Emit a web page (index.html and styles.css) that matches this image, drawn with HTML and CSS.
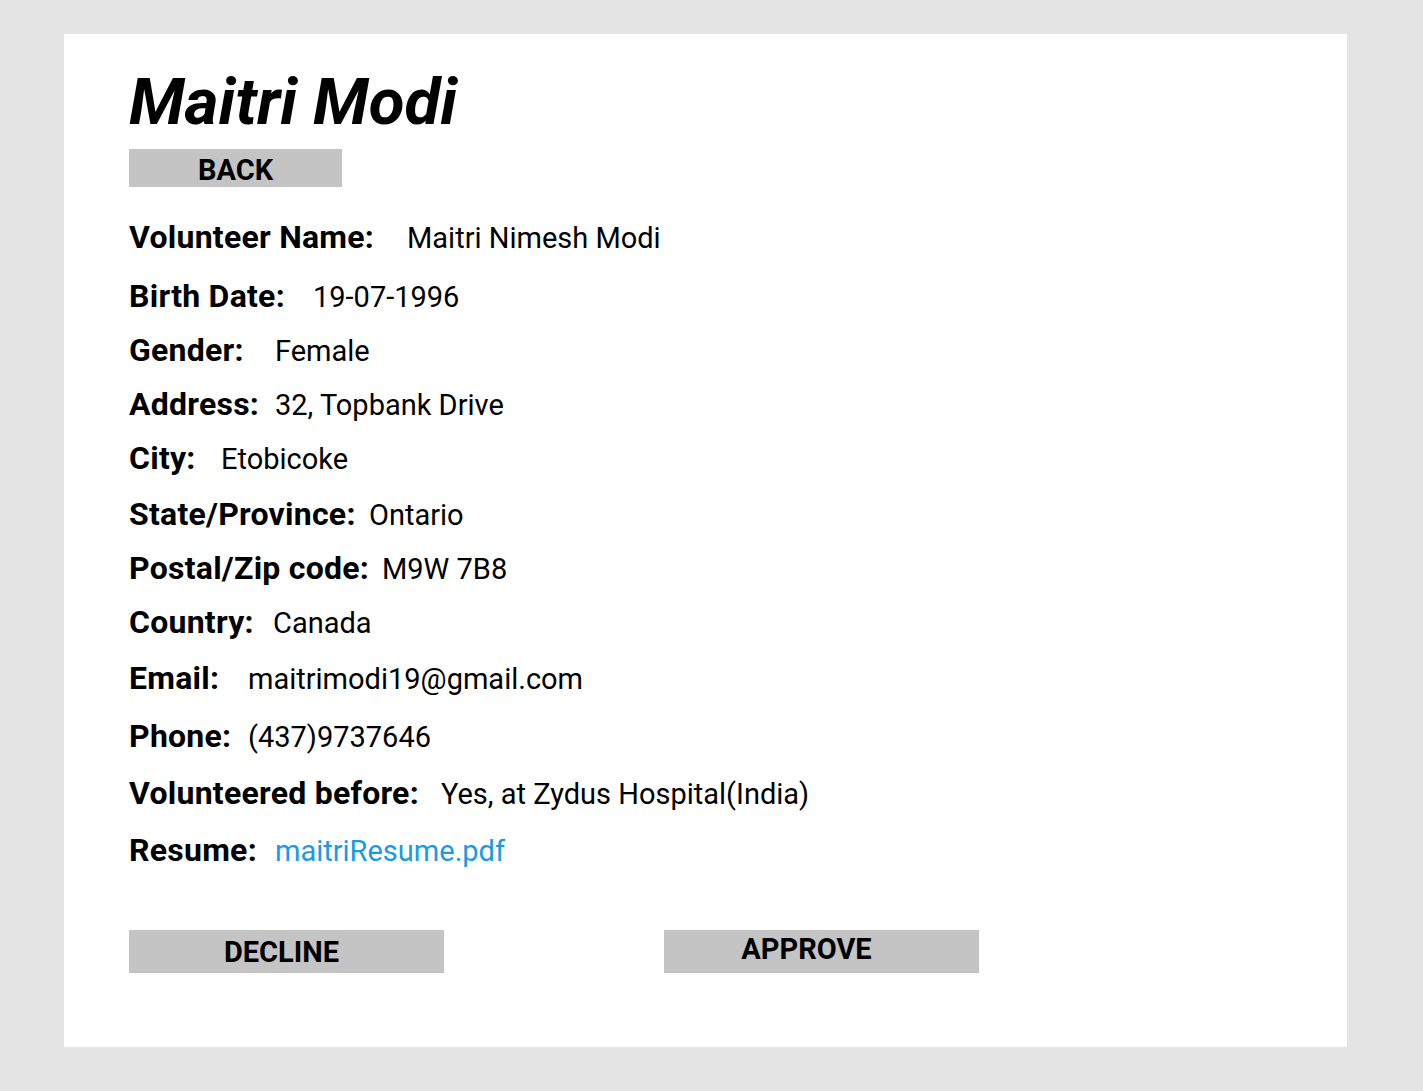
FILE: index.html
```html
<!DOCTYPE html>
<html lang="en">
<head>
<meta charset="utf-8">
<title>Maitri Modi</title>
<link rel="stylesheet" href="styles.css">
</head>
<body>
<main class="card">
  <h1 class="title">Maitri Modi</h1>
  <button class="btn btn-back">BACK</button>
  <section class="details">
    <div class="row"><span class="label">Volunteer Name:</span><span class="value">Maitri Nimesh Modi</span></div>
    <div class="row"><span class="label">Birth Date:</span><span class="value">19-07-1996</span></div>
    <div class="row"><span class="label">Gender:</span><span class="value">Female</span></div>
    <div class="row"><span class="label">Address:</span><span class="value">32, Topbank Drive</span></div>
    <div class="row"><span class="label">City:</span><span class="value">Etobicoke</span></div>
    <div class="row"><span class="label">State/Province:</span><span class="value">Ontario</span></div>
    <div class="row"><span class="label">Postal/Zip code:</span><span class="value">M9W 7B8</span></div>
    <div class="row"><span class="label">Country:</span><span class="value">Canada</span></div>
    <div class="row"><span class="label">Email:</span><span class="value">maitrimodi19@gmail.com</span></div>
    <div class="row"><span class="label">Phone:</span><span class="value">(437)9737646</span></div>
    <div class="row"><span class="label">Volunteered before:</span><span class="value">Yes, at Zydus Hospital(India)</span></div>
    <div class="row"><span class="label">Resume:</span><a class="value link" href="#">maitriResume.pdf</a></div>
  </section>
  <div class="actions">
    <button class="btn btn-action btn-decline">DECLINE</button>
    <button class="btn btn-action btn-approve">APPROVE</button>
  </div>
</main>
</body>
</html>
```

FILE: styles.css
```css
* {
  box-sizing: border-box;
}

html, body {
  margin: 0;
  padding: 0;
}

body {
  background: #e4e4e4;
  font-family: Roboto, "Liberation Sans", sans-serif;
  color: #000;
  padding: 34px 0 0 64px;
  min-height: 1091px;
}

.card {
  width: 1283px;
  height: 1013px;
  background: #fff;
  padding: 35px 0 0 65px;
  display: flex;
  flex-direction: column;
  align-items: flex-start;
}

.title {
  margin: 0;
  font-size: 65.5px;
  line-height: 66px;
  font-weight: 700;
  font-style: italic;
}

.btn {
  border: none;
  background: #c4c4c4;
  font-family: Roboto, "Liberation Sans", sans-serif;
  font-weight: 700;
  font-size: 29px;
  color: #000;
  text-align: center;
  display: block;
  margin: 0;
  cursor: pointer;
}

.btn-back {
  margin-top: 14px;
  width: 213px;
  height: 38px;
  padding: 4px 0 0 0;
  line-height: 34px;
}

.details {
  margin-top: 34px;
  display: flex;
  flex-direction: column;
}

.row {
  display: flex;
  align-items: baseline;
  height: 32px;
  line-height: 32px;
}

.label {
  font-weight: 700;
  font-size: 32px;
  letter-spacing: 0.25px;
  flex: none;
  white-space: nowrap;
}

.value {
  font-weight: 400;
  font-size: 29px;
  white-space: nowrap;
}

.link {
  color: #1a9ae6;
  text-decoration: none;
}

.row:nth-child(1) .label { width: 278px; }
.row:nth-child(2) { margin-top: 27px; }
.row:nth-child(2) .label { width: 184px; }
.row:nth-child(3) { margin-top: 22px; }
.row:nth-child(3) .label { width: 146px; }
.row:nth-child(4) { margin-top: 22px; }
.row:nth-child(4) .label { width: 146px; }
.row:nth-child(5) { margin-top: 22px; }
.row:nth-child(5) .label { width: 92px; }
.row:nth-child(6) { margin-top: 24px; }
.row:nth-child(6) .label { width: 240px; }
.row:nth-child(7) { margin-top: 22px; }
.row:nth-child(7) .label { width: 253px; }
.row:nth-child(8) { margin-top: 22px; }
.row:nth-child(8) .label { width: 144px; }
.row:nth-child(9) { margin-top: 24px; }
.row:nth-child(9) .label { width: 119px; }
.row:nth-child(10) { margin-top: 26px; }
.row:nth-child(10) .label { width: 119px; }
.row:nth-child(11) { margin-top: 25px; }
.row:nth-child(11) .label { width: 312px; }
.row:nth-child(12) { margin-top: 25px; }
.row:nth-child(12) .label { width: 146px; }

.actions {
  margin-top: 64px;
  display: flex;
  gap: 220px;
}

.btn-action {
  width: 315px;
  height: 43px;
}

.btn-decline {
  padding: 1px 10px 0 0;
  line-height: 42px;
}

.btn-approve {
  padding: 0 30px 5px 0;
  line-height: 38px;
}
```
